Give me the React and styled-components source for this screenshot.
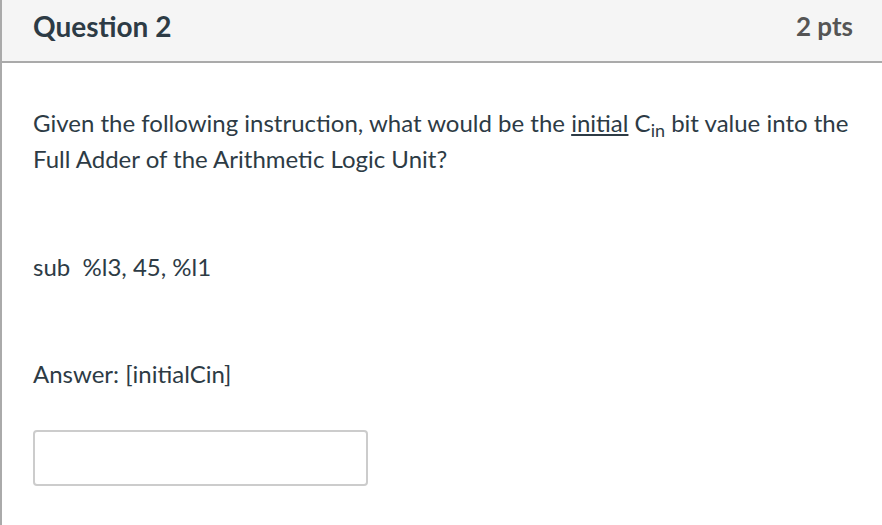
import React from 'react';
import styled, { createGlobalStyle } from 'styled-components';

const GlobalStyle = createGlobalStyle`
  html, body {
    margin: 0;
    padding: 0;
    background: #fff;
  }
  body {
    font-family: Lato, "Open Sans", sans-serif;
    color: #2d3b45;
  }
`;

const Card = styled.div`
  width: 882px;
  height: 525px;
  box-sizing: border-box;
  border-left: 2px solid #aaaaaa;
  display: flex;
  flex-direction: column;
  overflow: hidden;
`;

const Header = styled.div`
  height: 61px;
  box-sizing: content-box;
  background: #f5f5f5;
  border-bottom: 2px solid #aaaaaa;
  display: flex;
  align-items: center;
  justify-content: space-between;
  padding: 0 29px 0 31px;
`;

const Title = styled.h2`
  margin: 0;
  font-size: 28px;
  font-weight: 700;
  color: #2d3b45;
  padding-bottom: 10px;
`;

const Points = styled.div`
  font-size: 26px;
  font-weight: 700;
  color: #555;
  padding-bottom: 10px;
`;

const Body = styled.div`
  padding: 42px 31px 0;
  font-size: 24px;
  line-height: 36px;
`;

const Para = styled.p`
  margin: 0 0 ${props => props.gap || 0}px;
`;

const Under = styled.span`
  text-decoration: underline;
`;

const Sub = styled.sub`
  font-size: 0.75em;
  line-height: 0;
  vertical-align: -0.3em;
`;

const AnswerBox = styled.input`
  display: block;
  width: 335px;
  height: 56px;
  box-sizing: border-box;
  border: 2px solid #cccccc;
  border-radius: 4px;
  background: #fff;
  outline: none;
`;

export default function App() {
  return (
    <>
      <GlobalStyle />
      <Card>
        <Header>
          <Title>Question 2</Title>
          <Points>2 pts</Points>
        </Header>
        <Body>
          <Para gap={72}>
            Given the following instruction, what would be the <Under>initial</Under> C<Sub>in</Sub> bit value into the Full Adder of the Arithmetic Logic Unit?
          </Para>
          <Para gap={71}>sub&nbsp; %l3, 45, %l1</Para>
          <Para gap={38}>Answer: [initialCin]</Para>
          <AnswerBox type="text" />
        </Body>
      </Card>
    </>
  );
}
